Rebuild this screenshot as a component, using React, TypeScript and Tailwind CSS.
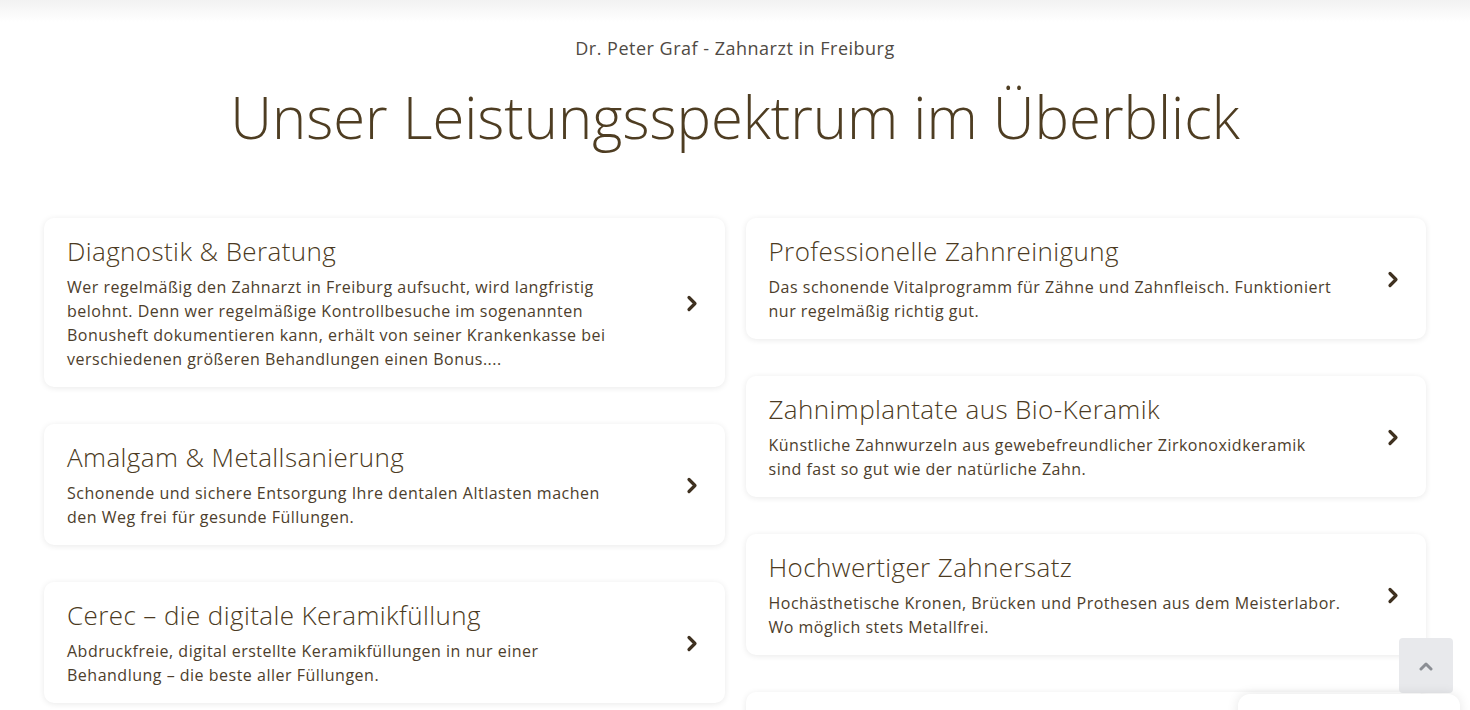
import React from 'react';

type Service = {
  title: string;
  text: string;
};

// line breaks follow the original layout
const leftColumn: Service[] = [
  {
    title: 'Diagnostik & Beratung',
    text: 'Wer regelmäßig den Zahnarzt in Freiburg aufsucht, wird langfristig\nbelohnt. Denn wer regelmäßige Kontrollbesuche im sogenannten\nBonusheft dokumentieren kann, erhält von seiner Krankenkasse bei\nverschiedenen größeren Behandlungen einen Bonus....',
  },
  {
    title: 'Amalgam & Metallsanierung',
    text: 'Schonende und sichere Entsorgung Ihre dentalen Altlasten machen\nden Weg frei für gesunde Füllungen.',
  },
  {
    title: 'Cerec – die digitale Keramikfüllung',
    text: 'Abdruckfreie, digital erstellte Keramikfüllungen in nur einer\nBehandlung – die beste aller Füllungen.',
  },
];

const rightColumn: Service[] = [
  {
    title: 'Professionelle Zahnreinigung',
    text: 'Das schonende Vitalprogramm für Zähne und Zahnfleisch. Funktioniert\nnur regelmäßig richtig gut.',
  },
  {
    title: 'Zahnimplantate aus Bio-Keramik',
    text: 'Künstliche Zahnwurzeln aus gewebefreundlicher Zirkonoxidkeramik\nsind fast so gut wie der natürliche Zahn.',
  },
  {
    title: 'Hochwertiger Zahnersatz',
    text: 'Hochästhetische Kronen, Brücken und Prothesen aus dem Meisterlabor.\nWo möglich stets Metallfrei.',
  },
];

const font = { fontFamily: '"Open Sans", "Noto Sans", sans-serif' };

const Chevron: React.FC = () => (
  <svg width="12" height="17" viewBox="0 0 12 17" fill="none" className="shrink-0">
    <path d="M3 2.5 L9 8.5 L3 14.5" stroke="#3f3120" strokeWidth="3.2" strokeLinecap="round" strokeLinejoin="round" />
  </svg>
);

const ServiceCard: React.FC<{ item: Service }> = ({ item }) => (
  <a
    href="#"
    className="flex items-center justify-between bg-white rounded-[10px] pl-[23px] pr-[27px] pt-[17px] pb-[16px] shadow-[0_1px_6px_rgba(0,0,0,0.09)]"
  >
    <div className="w-[590px]">
      <h3 className="text-[26px] leading-[32px] font-light text-[#4b3a22] tracking-[0.4px]">{item.title}</h3>
      <p className="mt-[8px] text-[16px] leading-[24px] font-normal text-[#4d3e2c] tracking-[0.5px] whitespace-pre-line">
        {item.text}
      </p>
    </div>
    <Chevron />
  </a>
);

const App: React.FC = () => {
  return (
    <div className="min-h-screen bg-white" style={font}>
      {/* shadow of the sticky header above */}
      <div className="h-[22px] bg-gradient-to-b from-[#f2f2f2] to-white" />

      <div className="text-center">
        <p className="mt-[13px] text-[18px] leading-[26px] text-[#4f4a44] tracking-[0.5px]">Dr. Peter Graf - Zahnarzt in Freiburg</p>
        <h1 className="mt-[17px] text-[58px] leading-[78px] font-light text-[#4e3d22]">
          Unser Leistungsspektrum im Überblick
        </h1>
      </div>

      <div className="mx-[44px] mt-[62px] grid grid-cols-2 gap-[21px] items-start pb-[80px]">
        <div className="flex flex-col gap-[37px]">
          {leftColumn.map((s) => (
            <ServiceCard key={s.title} item={s} />
          ))}
        </div>
        <div className="flex flex-col gap-[37px]">
          {rightColumn.map((s) => (
            <ServiceCard key={s.title} item={s} />
          ))}
          <div className="h-[121px] bg-white rounded-[10px] shadow-[0_1px_6px_rgba(0,0,0,0.09)]" />
        </div>
      </div>

      {/* scroll to top */}
      <button className="fixed right-[17px] bottom-[17px] w-[54px] h-[55px] rounded-[4px] bg-[#e8e9ec] flex items-center justify-center">
        <svg width="14" height="10" viewBox="0 0 14 10" fill="none">
          <path d="M2 8 L7 3 L12 8" stroke="#8b8e94" strokeWidth="3" strokeLinecap="round" strokeLinejoin="round" />
        </svg>
      </button>

      {/* widget peeking in at the bottom */}
      <div className="fixed left-[1238px] bottom-[-40px] w-[222px] h-[56px] rounded-[12px] bg-white shadow-[0_0_12px_rgba(0,0,0,0.1)]" />
    </div>
  );
};

export default App;
